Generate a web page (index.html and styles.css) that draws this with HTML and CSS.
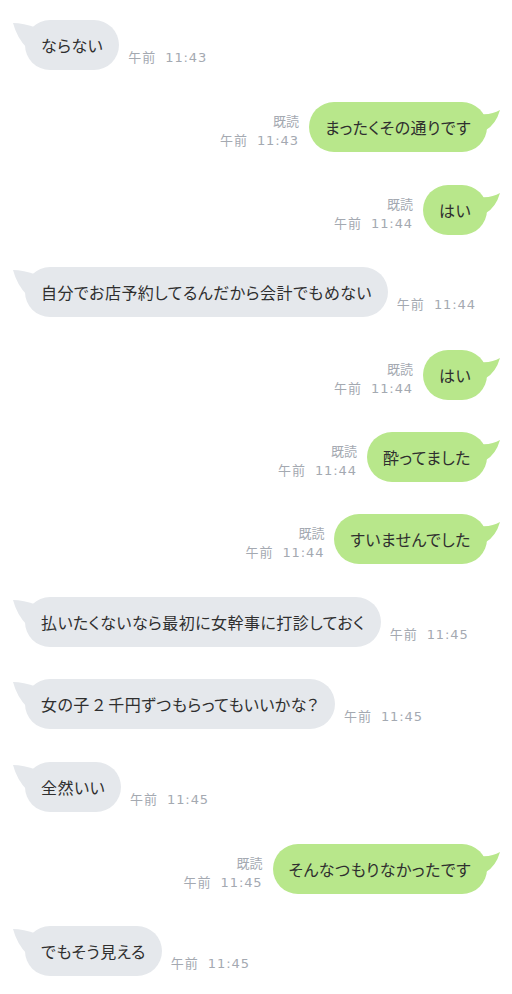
FILE: index.html
```html
<!DOCTYPE html>
<html lang="ja">
<head>
<meta charset="utf-8">
<link rel="stylesheet" href="styles.css">
</head>
<body>
<div class="chat">
  <div class="row in">
    <div class="bubble"><svg class="tail" viewBox="0 0 26 30" width="26" height="30"><path d="M0,3 Q10,3 24,8 L24,28 L14,28 Q4,18 0,3 Z"/></svg>ならない</div>
    <div class="meta"><span class="t">午前<span class="hm">11:43</span></span></div>
  </div>
  <div class="row out">
    <div class="meta"><span class="read">既読</span><span class="t">午前<span class="hm">11:43</span></span></div>
    <div class="bubble"><svg class="tail" viewBox="0 0 26 30" width="26" height="30"><path d="M26,8 Q18,13 6,12 L2,12 L2,28 L12,28 Q22,22 26,8 Z"/></svg>まったくその通りです</div>
  </div>
  <div class="row out">
    <div class="meta"><span class="read">既読</span><span class="t">午前<span class="hm">11:44</span></span></div>
    <div class="bubble"><svg class="tail" viewBox="0 0 26 30" width="26" height="30"><path d="M26,8 Q18,13 6,12 L2,12 L2,28 L12,28 Q22,22 26,8 Z"/></svg>はい</div>
  </div>
  <div class="row in">
    <div class="bubble"><svg class="tail" viewBox="0 0 26 30" width="26" height="30"><path d="M0,3 Q10,3 24,8 L24,28 L14,28 Q4,18 0,3 Z"/></svg>自分でお店予約してるんだから会計でもめない</div>
    <div class="meta"><span class="t">午前<span class="hm">11:44</span></span></div>
  </div>
  <div class="row out">
    <div class="meta"><span class="read">既読</span><span class="t">午前<span class="hm">11:44</span></span></div>
    <div class="bubble"><svg class="tail" viewBox="0 0 26 30" width="26" height="30"><path d="M26,8 Q18,13 6,12 L2,12 L2,28 L12,28 Q22,22 26,8 Z"/></svg>はい</div>
  </div>
  <div class="row out">
    <div class="meta"><span class="read">既読</span><span class="t">午前<span class="hm">11:44</span></span></div>
    <div class="bubble"><svg class="tail" viewBox="0 0 26 30" width="26" height="30"><path d="M26,8 Q18,13 6,12 L2,12 L2,28 L12,28 Q22,22 26,8 Z"/></svg>酔ってました</div>
  </div>
  <div class="row out">
    <div class="meta"><span class="read">既読</span><span class="t">午前<span class="hm">11:44</span></span></div>
    <div class="bubble"><svg class="tail" viewBox="0 0 26 30" width="26" height="30"><path d="M26,8 Q18,13 6,12 L2,12 L2,28 L12,28 Q22,22 26,8 Z"/></svg>すいませんでした</div>
  </div>
  <div class="row in">
    <div class="bubble"><svg class="tail" viewBox="0 0 26 30" width="26" height="30"><path d="M0,3 Q10,3 24,8 L24,28 L14,28 Q4,18 0,3 Z"/></svg>払いたくないなら最初に女幹事に打診しておく</div>
    <div class="meta"><span class="t">午前<span class="hm">11:45</span></span></div>
  </div>
  <div class="row in">
    <div class="bubble"><svg class="tail" viewBox="0 0 26 30" width="26" height="30"><path d="M0,3 Q10,3 24,8 L24,28 L14,28 Q4,18 0,3 Z"/></svg>女の子<span class="fw">２</span>千円ずつもらってもいいかな？</div>
    <div class="meta"><span class="t">午前<span class="hm">11:45</span></span></div>
  </div>
  <div class="row in">
    <div class="bubble"><svg class="tail" viewBox="0 0 26 30" width="26" height="30"><path d="M0,3 Q10,3 24,8 L24,28 L14,28 Q4,18 0,3 Z"/></svg>全然いい</div>
    <div class="meta"><span class="t">午前<span class="hm">11:45</span></span></div>
  </div>
  <div class="row out">
    <div class="meta"><span class="read">既読</span><span class="t">午前<span class="hm">11:45</span></span></div>
    <div class="bubble"><svg class="tail" viewBox="0 0 26 30" width="26" height="30"><path d="M26,8 Q18,13 6,12 L2,12 L2,28 L12,28 Q22,22 26,8 Z"/></svg>そんなつもりなかったです</div>
  </div>
  <div class="row in">
    <div class="bubble"><svg class="tail" viewBox="0 0 26 30" width="26" height="30"><path d="M0,3 Q10,3 24,8 L24,28 L14,28 Q4,18 0,3 Z"/></svg>でもそう見える</div>
    <div class="meta"><span class="t">午前<span class="hm">11:45</span></span></div>
  </div>
</div>
</body>
</html>
```
FILE: styles.css
```css
html, body {
  margin: 0;
  padding: 0;
  background: #ffffff;
}

.chat {
  display: flex;
  flex-direction: column;
  gap: 32.4px;
  padding: 20px 25px 0 25px;
  font-family: "Noto Sans CJK JP", "Noto Sans", sans-serif;
}

.row {
  display: flex;
  align-items: flex-end;
}

.row.out {
  justify-content: flex-end;
}

.bubble {
  position: relative;
  height: 50px;
  line-height: 50px;
  padding: 0 16px;
  border-radius: 25px;
  font-size: 16px;
  color: #2f2f2f;
  font-feature-settings: "palt";
  letter-spacing: 0.45px;
  white-space: nowrap;
}

.fw {
  font-feature-settings: normal;
  padding: 0 1px;
}

.in .bubble {
  background: #e5e8ec;
}

.out .bubble {
  background: #b8e78b;
}

.tail {
  position: absolute;
  top: 0;
  display: block;
}

.in .tail {
  left: -12px;
  fill: #e5e8ec;
}

.out .tail {
  right: -13px;
  fill: #b8e78b;
}

.meta {
  display: flex;
  flex-direction: column;
  font-size: 13px;
  line-height: 19px;
  color: #a4a9b1;
  white-space: nowrap;
}

.in .meta {
  margin-left: 9px;
  margin-bottom: 3px;
}

.out .meta {
  align-items: flex-end;
  margin-right: 10px;
  margin-bottom: 2px;
}

.read {
  font-family: "Noto Sans CJK JP", sans-serif;
}

.t {
  font-family: "Noto Sans CJK JP", sans-serif;
  letter-spacing: 1px;
}

.hm {
  font-family: "DejaVu Sans", sans-serif;
  margin-left: 9px;
  letter-spacing: 0.9px;
}
```
